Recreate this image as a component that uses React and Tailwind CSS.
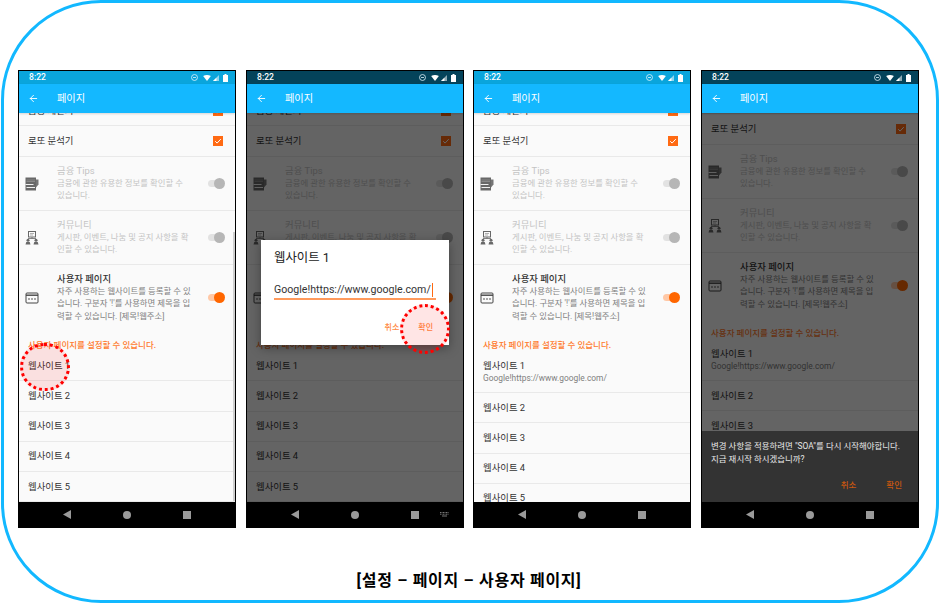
import React from 'react';
import { ArrowLeft } from 'lucide-react';

const TipsIcon = () => (
  <svg width="14" height="14" viewBox="0 0 14 14" className="shrink-0 opacity-80">
    <path d="M0.5 0.5h10.5v13H0.5z" fill="#444" />
    <path d="M11 2.5h2.5v5L11 10.5z" fill="#555" />
    <path d="M1.5 3h8.5M1.5 4.5h8.5" stroke="#888" strokeWidth="0.6" />
    <path d="M0.5 7.5h8M1.5 10.5h8.5" stroke="#eee" strokeWidth="1" />
  </svg>
);

const CommunityIcon = () => (
  <svg width="14" height="14" viewBox="0 0 14 14" className="shrink-0 opacity-80" fill="none">
    <rect x="3.5" y="0.5" width="7" height="5.5" stroke="#444" strokeWidth="1" />
    <path d="M5 2.5h4M5 4h3" stroke="#777" strokeWidth="0.7" />
    <path d="M7 6v1.5M3 7.5h8" stroke="#444" strokeWidth="0.8" />
    <circle cx="3" cy="9.3" r="1.5" fill="#444" />
    <circle cx="11" cy="9.3" r="1.5" fill="#444" />
    <path d="M0.5 13.5l.8-2.6h3.4l.8 2.6zM8.5 13.5l.8-2.6h3.4l.8 2.6z" fill="#444" />
  </svg>
);

const BrowserIcon = () => (
  <svg width="14" height="14" viewBox="0 0 14 14" className="shrink-0" fill="none">
    <rect x="1" y="2" width="12" height="10" rx="1" stroke="#444" strokeWidth="1" />
    <path d="M1 4.2h12" stroke="#444" strokeWidth="1.4" />
    <path d="M3 8h2M6 8h2M9 8h2" stroke="#555" strokeWidth="1" />
  </svg>
);

const StatusIcons = () => (
  <div className="flex items-center gap-[2px]">
    <svg width="7" height="7" viewBox="0 0 8 8" fill="none" className="mr-[3px]">
      <circle cx="4" cy="4" r="3.4" stroke="#e6f7ff" strokeWidth="0.9" />
      <path d="M2.3 4h3.4" stroke="#e6f7ff" strokeWidth="0.9" />
    </svg>
    <svg width="8" height="6" viewBox="0 0 9 7">
      <path d="M0 1.2C2.6-.4 6.4-.4 9 1.2L4.5 7z" fill="#fff" />
    </svg>
    <svg width="6" height="6" viewBox="0 0 7 7">
      <path d="M7 0v7H0z" fill="#ffffff" fillOpacity="0.55" />
      <path d="M4 3.2V7H0z" fill="#fff" />
    </svg>
    <svg width="5" height="8" viewBox="0 0 5 8" className="ml-[2px]">
      <path d="M1.5 0h2v1H5v7H0V1h1.5z" fill="#fff" />
      <path d="M1.3 2.2h2.4v3H1.3z" fill="#ffffff" fillOpacity="0.25" />
    </svg>
  </div>
);

const Toggle = ({ on }) => (
  <div className={on ? 'relative ml-auto mr-[11px] h-[7px] w-[16px] shrink-0 rounded-full bg-[#ffc8a6]' : 'relative ml-auto mr-[11px] h-[7px] w-[16px] shrink-0 rounded-full bg-[#e2e2e2]'}>
    <div
      className={
        on
          ? 'absolute right-[-1px] top-[-2px] h-[11px] w-[11px] rounded-full bg-[#ff6600]'
          : 'absolute right-[-1px] top-[-2px] h-[11px] w-[11px] rounded-full bg-[#b6b6b6]'
      }
    />
  </div>
);

const Checkbox = () => (
  <div className="ml-auto mr-[12px] flex h-[10px] w-[10px] shrink-0 items-center justify-center bg-[#ff6a13]">
    <svg width="8" height="8" viewBox="0 0 8 8" fill="none">
      <path d="M1.2 4.2l1.9 1.9 3.7-4" stroke="#fff" strokeWidth="1" />
    </svg>
  </div>
);

const CheckRow = ({ title, className }) => (
  <div className={`flex items-center border-b border-[#e9e9e9] pl-[9px] ${className}`}>
    <span className="text-[9.4px] text-[#333]">{title}</span>
    <Checkbox />
  </div>
);

const SwitchRow = ({ icon, title, lines, on, className }) => (
  <div className={`flex items-start pl-[6px] ${className}`}>
    <div className="flex w-[32px] shrink-0 self-stretch items-center">{icon}</div>
    <div className="pt-[8px] whitespace-nowrap">
      <div className={on ? 'text-[9.4px] font-medium leading-[12px] text-[#333]' : 'text-[9.4px] leading-[12px] text-[#c4c4c4]'}>{title}</div>
      {lines.map((line) => (
        <div key={line} className={on ? 'text-[8.4px] leading-[12.3px] text-[#808080]' : 'text-[8.4px] leading-[12.3px] text-[#c4c4c4]'}>
          {line}
        </div>
      ))}
    </div>
    <div className="flex flex-1 self-stretch items-center">
      <Toggle on={on} />
    </div>
  </div>
);

const SiteRow = ({ n, summary }) => (
  <div className={summary ? 'flex h-[42px] shrink-0 flex-col justify-center border-b border-[#e9e9e9] pl-[9px] text-[9.4px] text-[#333]' : 'flex h-[30.2px] shrink-0 flex-col justify-center border-b border-[#e9e9e9] pl-[9px] text-[9.4px] text-[#333]'}>
    <span className="leading-[12px]">웹사이트 {n}</span>
    {summary && <span className="text-[8.4px] leading-[12px] text-[#808080]">{summary}</span>}
  </div>
);

const Phone = ({ dim, scrollClass, firstSummary, scrollbar, keyboard, className, children }) => (
  <div className={`relative flex h-[458px] w-[218px] shrink-0 flex-col overflow-hidden border border-black bg-[#fafafa] ${className}`}>
    <div className={dim ? 'flex h-[13px] shrink-0 items-center justify-between bg-[#04435a] pl-[10px] pr-[7px]' : 'flex h-[13px] shrink-0 items-center justify-between bg-[#0aa5dc] pl-[10px] pr-[7px]'}>
      <span className="text-[8.6px] font-medium text-white">8:22</span>
      <StatusIcons />
    </div>
    <div className="z-10 flex h-[29px] shrink-0 items-center bg-[#14b8ff] pl-[9px] shadow-[0_1px_2px_rgba(0,0,0,0.15)]">
      <ArrowLeft size={11} color="#fff" strokeWidth={2} />
      <span className="ml-[18px] text-[10.2px] text-white">페이지</span>
    </div>
    <div className="min-h-0 flex-1 overflow-hidden">
      <div className={`flex flex-col ${scrollClass}`}>
        <CheckRow title="금융 계산기" className="h-[30.2px]" />
        <CheckRow title="로또 분석기" className="h-[31px]" />
        <SwitchRow
          icon={<TipsIcon />}
          title="금융 Tips"
          lines={['금융에 관한 유용한 정보를 확인할 수', '있습니다.']}
          className="h-[54px] border-b border-[#e9e9e9]"
        />
        <SwitchRow
          icon={<CommunityIcon />}
          title="커뮤니티"
          lines={['게시판, 이벤트, 나눔 및 공지 사항을 확', '인할 수 있습니다.']}
          className="h-[54px] border-b border-[#e9e9e9]"
        />
        <SwitchRow
          on
          icon={<BrowserIcon />}
          title="사용자 페이지"
          lines={['자주 사용하는 웹사이트를 등록할 수 있', '습니다. 구분자 \'!\'를 사용하면 제목을 입', '력할 수 있습니다. [제목!웹주소]']}
          className="h-[65px]"
        />
        <div className="flex h-[21px] items-end pl-[9px] text-[8.5px] font-medium leading-[12px] text-[#ff7a2e]">
          사용자 페이지를 설정할 수 있습니다.
        </div>
        <SiteRow n={1} summary={firstSummary} />
        <SiteRow n={2} />
        <SiteRow n={3} />
        <SiteRow n={4} />
        <SiteRow n={5} />
      </div>
    </div>
    <div className="flex h-[25px] shrink-0 items-center gap-[52px] bg-black pl-[44px]">
      <svg width="8" height="9" viewBox="0 0 8 9"><path d="M8 0v9L0 4.5z" fill="#9a9a9a" /></svg>
      <svg width="8" height="8" viewBox="0 0 8 8"><circle cx="4" cy="4" r="4" fill="#9a9a9a" /></svg>
      <svg width="8" height="8" viewBox="0 0 8 8"><rect width="8" height="8" fill="#9a9a9a" /></svg>
      {keyboard && (
        <svg width="9" height="5" viewBox="0 0 9 5" className="-ml-[31px]">
          <path d="M0 .5h9M0 2.2h9" stroke="#777" strokeWidth="1" strokeDasharray="1 .5" />
          <path d="M2 4h5" stroke="#777" strokeWidth="1" />
        </svg>
      )}
    </div>
    {scrollbar && <div className="absolute right-0 top-[161px] h-[269px] w-[2px] bg-[#cfcfcf]" />}
    {dim && <div className="absolute inset-x-0 top-[13px] bottom-[25px] bg-black/60" />}
    {children}
  </div>
);

const TapMark = ({ className }) => (
  <div className={`absolute rounded-full border-[3px] border-dotted border-[#ff0000] bg-[#ff0000]/10 ${className}`} />
);

const App = () => {
  return (
    <div className="h-[603px] w-[939px] overflow-hidden bg-white pl-px font-['Roboto','Noto_Sans_CJK_KR',sans-serif]">
      <div className="flex h-[603px] w-[938px] flex-col rounded-[100px] border-[3px] border-[#12b8ff] pl-[14px] pt-[67px]">
        <div className="flex">
          <Phone scrollClass="-mt-[17px]" scrollbar>
            <TapMark className="left-px top-[272px] h-[48px] w-[50px]" />
          </Phone>
          <Phone dim scrollClass="-mt-[17px]" keyboard className="ml-[10px]">
            <div className="absolute left-[14px] top-[169px] flex h-[105px] w-[188px] flex-col bg-white px-[13px] shadow-[0_3px_10px_rgba(0,0,0,0.35)]">
              <div className="pt-[9px] text-[12.4px] leading-[18px] text-[#222]">웹사이트 1</div>
              <div className="mt-[14px] flex h-[19px] items-center border-b-2 border-[#ff9a5c] text-[10.6px] text-[#333]">
                Google!https://www.google.com/
                <span className="ml-px h-[14px] w-px bg-[#ff6a13]" />
              </div>
              <div className="mt-[22px] flex justify-end gap-[19px] pr-[3px] text-[8px] font-medium text-[#ff8a45]">
                <span>취소</span>
                <span>확인</span>
              </div>
            </div>
            <TapMark className="left-[153px] top-[233px] h-[50px] w-[50px]" />
          </Phone>
          <Phone scrollClass="-mt-[17px]" firstSummary="Google!https://www.google.com/" className="ml-[9px]" />
          <Phone dim scrollClass="-mt-[29px]" firstSummary="Google!https://www.google.com/" className="ml-[10px]">
            <div className="absolute inset-x-0 bottom-[25px] flex h-[71px] flex-col bg-[#333] px-[9px]">
              <div className="pt-[9px] text-[8.45px] leading-[12.5px] text-[#e8e8e8]">
                <div>변경 사항을 적용하려면 "SOA"를 다시 시작해야합니다.</div>
                <div>지금 재시작 하시겠습니까?</div>
              </div>
              <div className="mt-[14px] flex justify-end gap-[30px] pr-[7px] text-[8.5px] font-medium text-[#c9570f]">
                <span>취소</span>
                <span>확인</span>
              </div>
            </div>
          </Phone>
        </div>
        <div className="mt-[43px] pr-[16px] text-center text-[16px] font-bold leading-[20px] tracking-[0.7px] text-black">[설정 – 페이지 – 사용자 페이지]</div>
      </div>
    </div>
  );
};

export default App;
